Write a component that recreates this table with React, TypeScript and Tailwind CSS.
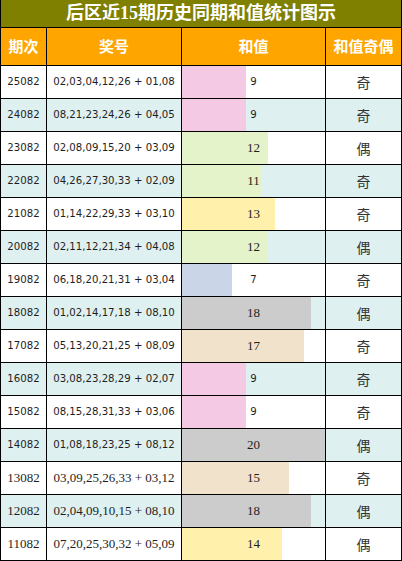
const rows: [string, string, number, string, string, boolean][] = [
  ["25082", "02,03,04,12,26 + 01,08", 9, "奇", "bg-[#f4c9e3]", false],
  ["24082", "08,21,23,24,26 + 04,05", 9, "奇", "bg-[#f4c9e3]", false],
  ["23082", "02,08,09,15,20 + 03,09", 12, "偶", "bg-[#e4f3c9]", false],
  ["22082", "04,26,27,30,33 + 02,09", 11, "奇", "bg-[#e4f3c9]", false],
  ["21082", "01,14,22,29,33 + 03,10", 13, "奇", "bg-[#fff1ab]", false],
  ["20082", "02,11,12,21,34 + 04,08", 12, "偶", "bg-[#e4f3c9]", false],
  ["19082", "06,18,20,21,31 + 03,04", 7, "奇", "bg-[#cad5e7]", false],
  ["18082", "01,02,14,17,18 + 08,10", 18, "偶", "bg-[#cccccc]", false],
  ["17082", "05,13,20,21,25 + 08,09", 17, "奇", "bg-[#f1e2cb]", false],
  ["16082", "03,08,23,28,29 + 02,07", 9, "奇", "bg-[#f4c9e3]", false],
  ["15082", "08,15,28,31,33 + 03,06", 9, "奇", "bg-[#f4c9e3]", false],
  ["14082", "01,08,18,23,25 + 08,12", 20, "偶", "bg-[#cccccc]", false],
  ["13082", "03,09,25,26,33 + 03,12", 15, "奇", "bg-[#f1e2cb]", true],
  ["12082", "02,04,09,10,15 + 08,10", 18, "偶", "bg-[#cccccc]", true],
  ["11082", "07,20,25,30,32 + 05,09", 14, "偶", "bg-[#fff1ab]", true],
];

const sans = "font-['DejaVu_Sans_Condensed',sans-serif] text-[11.3px]";
const serif = "font-['Liberation_Serif',serif] text-[13px]";

export default function App() {
  return (
    <div className="w-[402px] h-[561px] bg-white">
      <div className="grid grid-cols-[45px_134px_143px_75px] gap-px bg-black border-x border-b border-black text-[#1e1e1e]">
        <div className="col-span-4 h-[27px] bg-[#808000] flex items-center justify-center text-white text-[18px] font-bold font-['Liberation_Serif','Noto_Sans_CJK_SC',serif]">
          后区近15期历史同期和值统计图示
        </div>
        {["期次", "奖号", "和值", "和值奇偶"].map((h) => (
          <div
            key={h}
            className="h-[37px] bg-[#ffa500] flex items-center justify-center text-white text-[15px] font-bold font-['Noto_Sans_CJK_SC',sans-serif]"
          >
            {h}
          </div>
        ))}
        {rows.map(([qi, nums, sum, oe, bar, alt], i) => {
          const bg = i % 2 === 1 ? "bg-[#dff0f0]" : "bg-white";
          const f = alt ? serif : sans;
          return [
            <div key={qi + "a"} className={`h-[32px] ${bg} ${f} flex items-center justify-center`}>
              {qi}
            </div>,
            <div key={qi + "b"} className={`h-[32px] ${bg} ${f} flex items-center justify-center`}>
              {nums}
            </div>,
            <div key={qi + "c"} className={`h-[32px] ${bg} relative`}>
              <div className={`h-full ${bar}`} style={{ width: `${(sum / 20) * 100}%` }} />
              <div
                className={`absolute inset-0 flex items-center justify-center ${
                  sum >= 10 ? serif : sans
                }`}
              >
                {sum}
              </div>
            </div>,
            <div
              key={qi + "d"}
              className={`h-[32px] ${bg} flex items-center justify-center text-[14px] text-[#333] font-['Noto_Sans_CJK_SC',sans-serif]`}
            >
              {oe}
            </div>,
          ];
        })}
      </div>
    </div>
  );
}
